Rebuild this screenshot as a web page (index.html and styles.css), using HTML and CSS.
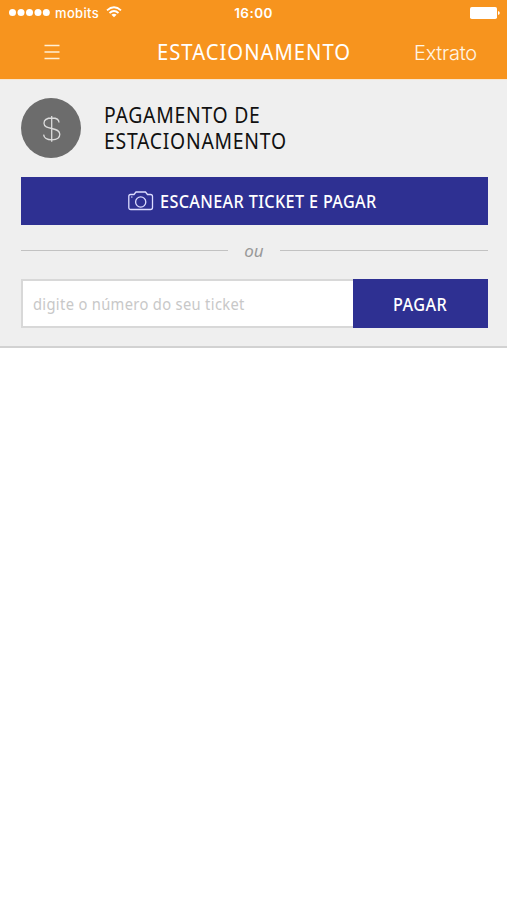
FILE: index.html
```html
<!DOCTYPE html>
<html lang="pt-BR">
<head>
<meta charset="utf-8">
<title>Estacionamento</title>
<link rel="stylesheet" href="styles.css">
</head>
<body>
<header class="top">
  <div class="status">
    <div class="carrier">
      <svg width="41" height="8" viewBox="0 0 41 8" fill="#fff"><circle cx="3.500" cy="3.500" r="3.500"/><circle cx="12" cy="3.500" r="3.500"/><circle cx="20.500" cy="3.500" r="3.500"/><circle cx="29" cy="3.500" r="3.500"/><circle cx="37.300" cy="3.500" r="3.500"/></svg>
      <span class="operator">mobits</span>
      <svg class="wifi" width="16" height="12" viewBox="0 0 16 12" fill="none" stroke="#fff" stroke-width="1.8"><path d="M1 4.400Q8-1.900 15 4.400M3.500 7Q8 3 12.500 7"/><path d="M8 11.200L5.400 8.700Q8 6.700 10.600 8.700Z" fill="#fff" stroke="none"/></svg>
    </div>
    <time class="clock">16:00</time>
    <svg class="battery" width="30" height="12" viewBox="0 0 30 12" fill="#fff"><rect width="27" height="12" rx="1.8"/><path d="M28 4Q29.800 4.300 29.800 6T28 8Z"/></svg>
  </div>
  <nav class="nav">
    <svg class="menu" width="16" height="16" viewBox="0 0 16 16" stroke="#fff0d6" stroke-width="1.4"><path d="M.5 1.500h15M.5 8h15M.5 14.500h15"/></svg>
    <h1 class="title">ESTACIONAMENTO</h1>
    <a class="extract">Extrato</a>
  </nav>
</header>
<main class="payment">
  <div class="intro">
    <svg class="money" width="60" height="60" viewBox="0 0 60 60" fill="none" stroke="#dcdcdc" stroke-width="1.3"><circle cx="30" cy="30" r="30" fill="#6c6c6c" stroke="none"/><path d="M38 24.500C38 21.500 35 20 31 20C26 20 23 22 23 25.200C23 28.800 26.500 29.600 30.800 30.500C35.500 31.500 38.800 32.500 38.800 36.300C38.800 40 35.500 41.800 31 41.800C26 41.800 23 39.800 22.600 36.600M30.700 18v25.800"/></svg>
    <h2 class="heading"><span class="heading-line">PAGAMENTO DE</span><span class="heading-line">ESTACIONAMENTO</span></h2>
  </div>
  <button class="scan">
    <svg width="26" height="20" viewBox="0 0 26 20" fill="none" stroke="#dcdcff" stroke-width="1.3"><path d="M2.500 3.500H6L8 1H17.500L19.500 3.500H22.500Q24.500 3.500 24.500 5.500V16.500Q24.500 18.500 22.500 18.500H2.800Q.8 18.500.8 16.500V5.500Q.8 3.500 2.500 3.500Z"/><circle cx="12.700" cy="11" r="5.100"/><path d="M3 6h1.500" stroke-width="1"/></svg>
    <span class="scan-label">ESCANEAR TICKET E PAGAR</span>
  </button>
  <div class="divider"><span class="or">ou</span></div>
  <form class="ticket">
    <label class="field"><span class="hint">digite o número do seu ticket</span></label>
    <button type="button" class="pay"><span class="pay-label">PAGAR</span></button>
  </form>
</main>
</body>
</html>
```
FILE: styles.css
```css
* { box-sizing: border-box; }
body { margin: 0; background: #fff; font-family: "Noto Sans", sans-serif; }
h1, h2 { margin: 0; font-weight: 400; }
svg { display: block; flex: none; }
button { border: 0; padding: 0; font-family: inherit; color: #fff; background: #2e3092; }

.top { height: 79px; background: #f7941e; color: #fff; }
.status {
  display: grid;
  grid-template-columns: 1fr auto 1fr;
  align-items: center;
  height: 26px;
  padding: 0 7px 0 9px;
  font: 500 13px/16px Inter, sans-serif;
}
.carrier { display: flex; align-items: center; }
.operator { margin-left: 5px; letter-spacing: .35px; }
.wifi { margin-left: 7px; margin-top: -2px; }
.clock { margin-right: 2px; font-weight: 600; font-size: 13.500px; letter-spacing: .45px; }
.battery { justify-self: end; }
.nav {
  display: grid;
  grid-template-columns: 113px 194px 1fr;
  align-items: center;
  height: 52px;
  padding-left: 44px;
}
.title {
  font-size: 22.500px;
  line-height: 30px;
  letter-spacing: 1.1px;
  white-space: nowrap;
  transform: scaleX(.9);
  transform-origin: left;
}
.extract { margin: 2px 0 0 63px; font: 300 20px/24px Inter, sans-serif; color: #fff4e4; letter-spacing: -.25px; }

.payment {
  height: 269px;
  padding: 18px 19px 0 20.500px;
  background: #efefef;
  border-top: 1px solid #f8e6cf;
  border-bottom: 2px solid #d2d2d2;
}
.intro { display: flex; align-items: center; height: 60px; }
.heading { margin: -3px 0 0 23.500px; font-size: 22px; line-height: 26px; color: #111; }
.heading-line {
  display: block;
  letter-spacing: .85px;
  white-space: nowrap;
  transform: scaleX(.88);
  transform-origin: left;
}
.scan {
  display: flex;
  align-items: center;
  width: 467px;
  height: 48px;
  margin-top: 19px;
  padding-left: 107.500px;
}
.scan-label {
  margin-left: 6px;
  font-size: 18px;
  font-weight: 500;
  letter-spacing: .4px;
  white-space: nowrap;
  transform: scaleX(.9);
  transform-origin: left;
}
.divider {
  display: flex;
  align-items: center;
  width: 467px;
  height: 50px;
}
.divider::before, .divider::after { content: ""; flex: 1; height: 1px; background: #c2c2c2; }
.or { width: 52px; text-align: center; font-size: 17px; font-style: italic; color: #999; }
.ticket { display: flex; width: 467px; height: 49px; margin-top: 4px; }
.field {
  display: flex;
  align-items: center;
  width: 332px;
  padding-left: 10.500px;
  border: 2px solid #d8d8d8;
  border-right: 0;
  background: #fff;
}
.hint {
  font-size: 16px;
  line-height: 22px;
  letter-spacing: .35px;
  color: #c8c8c8;
  white-space: nowrap;
  transform: scaleX(.92);
  transform-origin: left;
}
.pay { flex: 1; }
.pay-label { display: inline-block; font-size: 18px; font-weight: 500; letter-spacing: .5px; transform: scaleX(.9); }
```
